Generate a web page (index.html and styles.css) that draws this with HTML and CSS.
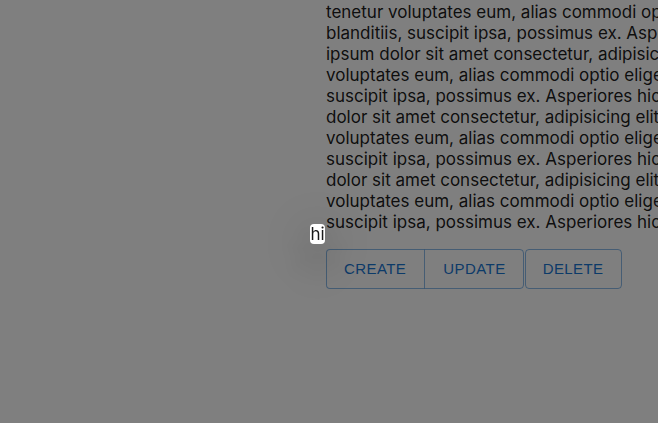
FILE: index.html
```html
<!DOCTYPE html>
<html lang="en">
<head>
<meta charset="utf-8">
<title>Popover demo</title>
<link rel="stylesheet" href="styles.css">
</head>
<body>
<main class="page">
  <section class="content">
    <p class="lorem">tenetur voluptates eum, alias commodi optio eligendi nobis quae, doloremque velit<br>
    blanditiis, suscipit ipsa, possimus ex. Asperiores hic tenetur voluptates. Lorem<br>
    ipsum dolor sit amet consectetur, adipisicing elit. Asperiores hic tenetur<br>
    voluptates eum, alias commodi optio eligendi nobis quae, doloremque velit blanditiis,<br>
    suscipit ipsa, possimus ex. Asperiores hic tenetur voluptates. Lorem ipsum<br>
    dolor sit amet consectetur, adipisicing elit. Asperiores hic tenetur<br>
    voluptates eum, alias commodi optio eligendi nobis quae, doloremque velit blanditiis,<br>
    suscipit ipsa, possimus ex. Asperiores hic tenetur voluptates. Lorem ipsum<br>
    dolor sit amet consectetur, adipisicing elit. Asperiores hic tenetur<br>
    voluptates eum, alias commodi optio eligendi nobis quae, doloremque velit blanditiis,<br>
    suscipit ipsa, possimus ex. Asperiores hic tenetur voluptates.</p>
    <div class="actions">
      <div class="btn-group">
        <button class="btn" type="button">Create</button>
        <button class="btn" type="button">Update</button>
      </div>
      <button class="btn btn-single" type="button">Delete</button>
    </div>
  </section>
</main>
<div class="backdrop"></div>
<div class="popover">hi</div>
</body>
</html>
```
FILE: styles.css
```css
html, body {
  margin: 0;
  padding: 0;
  background: #ffffff;
  overflow: hidden;
  height: 100%;
}

body {
  font-family: Inter, "Liberation Sans", Arial, sans-serif;
  color: rgba(0, 0, 0, 0.9);
}

.page {
  display: flex;
  padding-left: 326px;
}

.content {
  display: flex;
  flex-direction: column;
  align-items: flex-start;
}

.lorem {
  margin: 0 0 16px;
  font-size: 17px;
  line-height: 21px;
  white-space: nowrap;
  padding-top: 2px;
}

.actions {
  display: flex;
  gap: 1px;
}

.btn-group {
  display: flex;
}

.btn {
  font-family: "Liberation Sans", Arial, sans-serif;
  font-size: 15px;
  letter-spacing: 0.43px;
  text-transform: uppercase;
  color: #1976d2;
  background: transparent;
  border: 1px solid rgba(25, 118, 210, 0.5);
  height: 40px;
  padding: 0 17px;
  margin: 0;
  line-height: 26px;
  cursor: pointer;
}

.btn-group .btn:first-child {
  border-radius: 4px 0 0 4px;
  border-right-color: transparent;
  padding-left: 17px;
  padding-right: 18px;
}

.btn-group .btn:last-child {
  border-radius: 0 4px 4px 0;
  border-left: 1px solid rgba(25, 118, 210, 0.5);
  margin-left: -1px;
  padding-left: 18px;
  padding-right: 17px;
}

.btn-single {
  border-radius: 4px;
  padding: 0 17px;
}

.backdrop {
  position: fixed;
  inset: 0;
  background: rgba(0, 0, 0, 0.5);
}

.popover {
  position: absolute;
  left: 310px;
  top: 224px;
  width: 15px;
  height: 20px;
  background: #ffffff;
  border-radius: 4px;
  font-size: 17px;
  line-height: 21px;
  text-align: center;
  color: rgba(0, 0, 0, 0.9);
  box-shadow: 0 11px 15px -7px rgba(0, 0, 0, 0.2), 0 24px 38px 3px rgba(0, 0, 0, 0.14), 0 9px 46px 8px rgba(0, 0, 0, 0.12);
}
```
